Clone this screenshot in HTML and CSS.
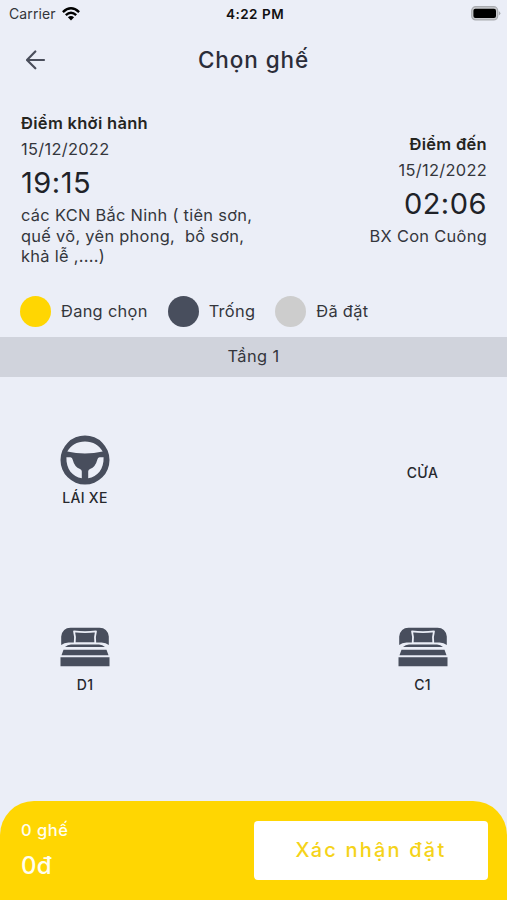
FILE: index.html
```html
<!DOCTYPE html>
<html lang="vi">
<head>
<meta charset="utf-8">
<title>Chọn ghế</title>
<link rel="stylesheet" href="styles.css">
</head>
<body>
<div class="screen">
  <div class="status">
    <div class="carrier"><span>Carrier</span>
      <svg class="wifi" width="18" height="14" viewBox="0 0 18 14" fill="none" stroke="#000" stroke-width="2.4"><path d="M.9 5.1Q9-2.5 17.1 5.1M3.8 8.1Q9 3.3 14.2 8.1"/><path d="M9 13.4 5.9 10.3Q9 7.7 12.1 10.3Z" fill="#000" stroke="none"/></svg>
    </div>
    <div class="clock">4:22 PM</div>
    <svg class="battery" width="31" height="15" viewBox="0 0 31 15"><rect x="1.7" y=".7" width="26" height="13.2" rx="4" fill="#c9cace" stroke="#a9abb0" stroke-width="1.2"/><rect x="3.4" y="2.7" width="22.6" height="9.2" rx="2" fill="#000"/><path d="M28.8 5Q32 7.3 28.800 9.6Z" fill="#a9abb0"/></svg>
  </div>
  <header class="header">
    <svg class="back" width="20" height="20" viewBox="0 0 20 20" fill="none" stroke="#4a4e5b" stroke-width="2.200" stroke-linecap="round" stroke-linejoin="round"><path d="M18 10H1.200M9.300 1.500 1 10l8.300 8.300"/></svg>
    <h1>Chọn ghế</h1>
  </header>
  <section class="trip">
    <div class="stop">
      <div class="label">Điểm khởi hành</div>
      <div class="date">15/12/2022</div>
      <div class="time">19:15</div>
      <div class="place">các KCN Bắc Ninh ( tiên sơn,<br>quế võ, yên phong,&nbsp; bồ sơn,<br>khả lễ ,....)</div>
    </div>
    <div class="stop end">
      <div class="label">Điểm đến</div>
      <div class="date">15/12/2022</div>
      <div class="time">02:06</div>
      <div class="place">BX Con Cuông</div>
    </div>
  </section>
  <div class="legend">
    <div class="key"><i class="dot selected"></i><span>Đang chọn</span></div>
    <div class="key"><i class="dot free"></i><span>Trống</span></div>
    <div class="key"><i class="dot booked"></i><span>Đã đặt</span></div>
  </div>
  <div class="floor"><span>Tầng 1</span></div>
  <main class="seats">
    <div class="seat driver">
      <svg width="50" height="50" viewBox="0 0 50 50"><path fill="#484e5d" fill-rule="evenodd" d="M25 .5a24.500 24.500 0 1 0 0 49a24.500 24.500 0 1 0 0-49ZM7.300 16.500C10.500 10.300 17 6.400 25 6.400S39.500 10.300 42.700 16.500Q34 18.600 25 18.600T7.300 16.500ZM6.400 22.300H10.500Q12.300 22.300 12.800 25Q14.500 32 20 34Q21.800 34.700 21.800 36.500V43.300C12.500 42 6 34 6.400 22.300ZM43.600 22.300C44 34 37.500 42 28.200 43.300V36.500Q28.200 34.700 30 34Q35.500 32 37.200 25Q37.700 22.300 39.500 22.300Z"/></svg>
      <span>LÁI XE</span>
    </div>
    <div class="seat door"><span>CỬA</span></div>
    <div class="seat">
      <svg class="bed" width="50" height="40" viewBox="0 0 50 40"><path fill="#484e5d" d="M1.200 18V9.500Q2.500.8 10.500.8H39.500Q47.500.8 48.800 9.500V18Q46 15.500 41.500 15.500H8.500Q4 15.500 1.200 18ZM5 20Q7.500 17.500 11 17.500H39Q42.500 17.500 45 20ZM3.500 22.800H46.500L48.500 28.200H1.500ZM.5 30.200H49.500V39.300H.5Z"/><path d="M14 4.300Q25 5.800 36 4.300Q34.300 10 35.300 16.200H14.700Q15.700 10 14 4.300Z" fill="#484e5d" stroke="#ebeef7" stroke-width="1.800" stroke-linejoin="round"/></svg>
      <span>D1</span>
    </div>
    <div class="seat">
      <svg class="bed" width="50" height="40" viewBox="0 0 50 40"><path fill="#484e5d" d="M1.200 18V9.500Q2.500.8 10.500.8H39.500Q47.500.8 48.800 9.500V18Q46 15.500 41.500 15.500H8.500Q4 15.500 1.200 18ZM5 20Q7.500 17.500 11 17.500H39Q42.500 17.500 45 20ZM3.500 22.800H46.500L48.500 28.200H1.500ZM.5 30.200H49.500V39.300H.5Z"/><path d="M14 4.300Q25 5.800 36 4.300Q34.300 10 35.300 16.200H14.700Q15.700 10 14 4.300Z" fill="#484e5d" stroke="#ebeef7" stroke-width="1.800" stroke-linejoin="round"/></svg>
      <span>C1</span>
    </div>
  </main>
  <footer class="bar">
    <div class="total"><div class="count">0 ghế</div><div class="price">0đ</div></div>
    <button class="confirm"><span>Xác nhận đặt</span></button>
  </footer>
</div>
</body>
</html>
```
FILE: styles.css
```css
* { box-sizing: border-box; }
body { margin: 0; background: #ebeef7; color: #34363c; font-family: Inter, "Noto Sans", sans-serif; }
.screen { width: 507px; height: 900px; display: flex; flex-direction: column; overflow: hidden; }
.status { height: 27px; padding: 0 6px 0 9px; display: grid; grid-template-columns: 1fr auto 1fr; align-items: center; color: #111; font-size: 13.5px; }
.carrier { display: flex; align-items: center; gap: 6px; font-size: 14px; letter-spacing: .1px; color: #33353a; }
.clock { font-weight: 600; letter-spacing: .5px; }
.battery { justify-self: end; }
.header { height: 65px; padding: 0 26px; display: grid; grid-template-columns: 20px 1fr 20px; align-items: center; }
h1 { margin: 0; text-align: center; font-size: 22.5px; line-height: 30px; font-weight: 550; color: #2b2d39; letter-spacing: .9px; }
.trip { height: 199px; padding: 20px 20px 0 21px; display: flex; justify-content: space-between; }
.stop.end { padding-top: 21px; text-align: right; }
.label { font-size: 16.5px; line-height: 23px; font-weight: 600; color: #25251f; letter-spacing: .3px; }
.date { font-size: 16.4px; line-height: 28px; letter-spacing: .3px; }
.time { font-size: 29px; line-height: 40px; color: #202228; letter-spacing: .5px; }
.place { padding-top: 2px; font-size: 16.4px; line-height: 20.7px; letter-spacing: .3px; }
.legend { height: 46px; padding: 5px 20px 0; display: flex; gap: 20px; align-items: flex-start; }
.key { display: flex; align-items: center; gap: 10px; font-size: 16.4px; line-height: 31px; letter-spacing: .3px; }
.dot { width: 31px; height: 31px; border-radius: 50%; }
.selected { background: #ffd602; }
.free { background: #484e5d; }
.booked { background: #cdcdcd; }
.floor { height: 40px; line-height: 39px; background: #d0d3dc; text-align: center; font-size: 16.4px; letter-spacing: .4px; }
.seats { height: 424px; padding: 0 0 0 1px; display: grid; grid-template-columns: 168px 1fr 169px; grid-template-rows: 187px 187px; }
.seat { display: flex; flex-direction: column; align-items: center; padding-top: 58px; font-size: 14px; line-height: 20px; letter-spacing: .3px; color: #26282d; font-weight: 450; }
.seat:nth-child(odd) { grid-column: 1; }
.seat:nth-child(even) { grid-column: 3; }
.seat span { margin-top: 3px; }
.seat.door { padding-top: 83px; }
.bed { margin: 5px 0; }
.bar { height: 99px; border-radius: 34px 34px 0 0; background: #ffd602; padding: 20px 19px 20px 21px; display: flex; justify-content: space-between; color: #fffef0; }
.total { font-weight: 500; }
.count { font-size: 16.5px; line-height: 19px; letter-spacing: .5px; }
.price { font-size: 24px; line-height: 52px; letter-spacing: .3px; }
.confirm { width: 234px; height: 59px; border: 0; border-radius: 4px; background: #fff; color: #f5d319; font: 450 20px Inter, sans-serif; letter-spacing: 2.2px; padding: 0 0 1px; }
```
